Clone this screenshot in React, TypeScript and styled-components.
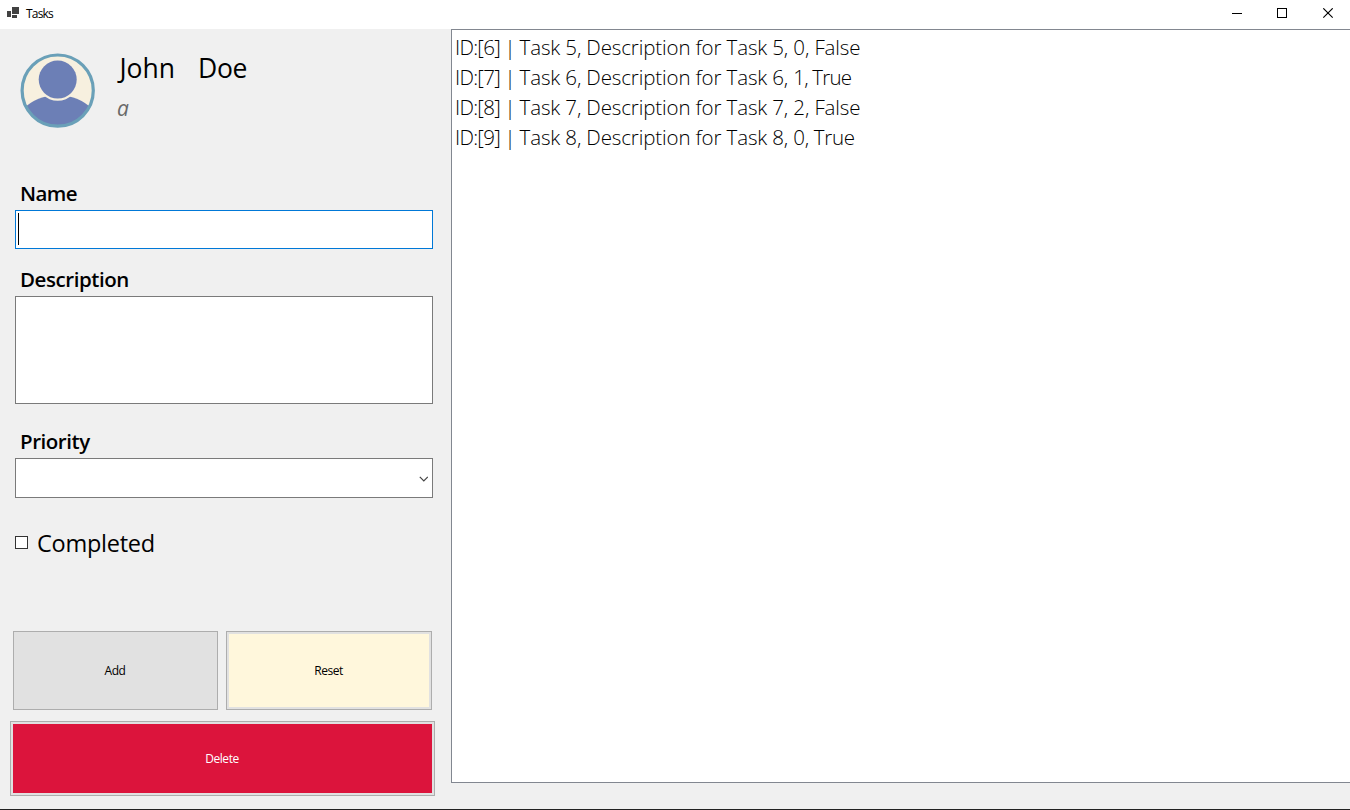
import React from "react";
import styled, { createGlobalStyle } from "styled-components";

const Global = createGlobalStyle`
  * { box-sizing: border-box; }
  html, body { margin: 0; overflow: hidden; background: #f0f0f0; }
  body { font-family: "Segoe UI", "Open Sans", "Noto Sans", sans-serif; color: #000; }
`;

const Window = styled.div`
  display: flex;
  flex-direction: column;
  width: 1350px;
  height: 810px;
  background: #f0f0f0;
  border-bottom: 1px solid #222;
`;

const TitleBar = styled.header`
  display: flex;
  flex: none;
  align-items: center;
  height: 29px;
  padding: 0 16px 3px 7px;
  background: #fff;
`;

const AppTitle = styled.span`
  margin: 1px 0 0 7px;
  font-size: 12px;
  line-height: 16px;
  letter-spacing: -0.8px;
`;

const WindowControls = styled.div`
  display: flex;
  gap: 34px;
  margin-left: auto;
`;

const Body = styled.main`
  display: flex;
  flex: 1;
  min-height: 0;
`;

const Sidebar = styled.section`
  flex: none;
  display: flex;
  flex-direction: column;
  width: 451px;
  padding: 24px 0 0 15px;
`;

const Profile = styled.div`
  display: flex;
  height: 121px;
  padding-left: 5px;
`;

const ProfileText = styled.div`
  margin-left: 22px;
`;

const FullName = styled.div`
  display: flex;
  gap: 23px;
  height: 30px;
  padding-left: 2.5px;
  font-size: 26.5px;
  line-height: 30px;
`;

const NamePart = styled.span<{ $track: number }>`
  letter-spacing: ${(p) => p.$track}px;
`;

const Role = styled.div`
  margin-top: 10px;
  font-size: 21px;
  line-height: 30px;
  font-style: italic;
  color: #696969;
`;

const Label = styled.label<{ $track: number }>`
  display: block;
  height: 36px;
  padding: 4px 0 0 5px;
  font-size: 20.5px;
  font-weight: 600;
  line-height: 30px;
  letter-spacing: ${(p) => p.$track}px;
`;

const Field = styled.div<{ $height: number; $gap: number; $focused?: boolean }>`
  display: flex;
  align-items: center;
  flex: none;
  width: 418px;
  height: ${(p) => p.$height}px;
  margin-bottom: ${(p) => p.$gap}px;
  padding: 0 2px;
  background: #fff;
  border: 1px solid ${(p) => (p.$focused ? "#0078d7" : "#7a7a7a")};
`;

const Caret = styled.span`
  width: 1px;
  height: 32px;
  margin-bottom: 1px;
  background: #000;
`;

const Chevron = styled.svg`
  margin: 1px 2px 0 auto;
`;

const CheckRow = styled.div`
  display: flex;
  align-items: center;
  height: 30px;
`;

const CheckBox = styled.span`
  width: 13px;
  height: 13px;
  margin: 0 9px 2px 0;
  background: #fff;
  border: 1px solid #333;
`;

const CheckText = styled.span`
  font-size: 23.5px;
  line-height: 30px;
  letter-spacing: -0.25px;
`;

const Actions = styled.div`
  display: grid;
  grid-template-columns: 205px 206px;
  column-gap: 8px;
  margin: 73px 0 11px -2px;
`;

const Button = styled.button<{ $fill: string; $ink?: string }>`
  height: 79px;
  padding: 0 1px 0 0;
  font: 12px/16px "Segoe UI", "Open Sans", "Noto Sans", sans-serif;
  letter-spacing: -0.45px;
  color: ${(p) => p.$ink ?? "#000"};
  background: ${(p) => p.$fill};
  border: 1px solid #adadad;
  border-radius: 0;
  box-shadow: inset 0 0 0 2px #e1e1e1;
`;

const DeleteButton = styled(Button)`
  width: 425px;
  height: 75px;
  margin-left: -5px;
`;

const TaskList = styled.ul`
  flex: 1;
  height: 754px;
  margin: 0;
  padding: 2px 0 0 3px;
  list-style: none;
  background: #fff;
  border: 1px solid #828790;
  border-right: 0;
`;

const TaskRow = styled.li`
  height: 30px;
  font-size: 20.5px;
  font-weight: 340;
  line-height: 30px;
  white-space: pre;
`;

const Segment = styled.span<{ $track: number }>`
  letter-spacing: ${(p) => p.$track}px;
`;

const tasks = [
  { id: 6, text: "Task 5, Description for Task 5, ", state: "0, False", track: -0.13 },
  { id: 7, text: "Task 6, Description for Task 6, ", state: "1, True", track: -0.8 },
  { id: 8, text: "Task 7, Description for Task 7, ", state: "2, False", track: -0.13 },
  { id: 9, text: "Task 8, Description for Task 8, ", state: "0, True", track: -0.3 },
];

const Avatar = () => (
  <svg width="75" height="75" viewBox="0 0 75 75">
    <defs>
      <clipPath id="disc">
        <circle cx="37.7" cy="37.6" r="35" />
      </clipPath>
    </defs>
    <circle cx="37.7" cy="37.6" r="35.5" fill="#f7f0df" />
    <g clipPath="url(#disc)">
      <circle cx="37.7" cy="92" r="50" fill="#6c7fb6" />
      <circle cx="37.7" cy="26.6" r="21.2" fill="#f7f0df" />
    </g>
    <circle cx="37.7" cy="26.6" r="19" fill="#6c7fb6" />
    <circle cx="37.7" cy="37.6" r="35.6" fill="none" stroke="#6aa0b8" strokeWidth="3.2" />
  </svg>
);

export default function App() {
  return (
    <>
      <Global />
      <Window>
        <TitleBar>
          <svg width="12" height="12" viewBox="0 0 12 12" fill="#424242" shapeRendering="crispEdges">
            <rect x="0" y="4" width="4" height="6" />
            <rect x="5" y="0" width="7" height="7" />
            <rect x="5" y="8" width="5" height="3" />
          </svg>
          <AppTitle>Tasks</AppTitle>
          <WindowControls>
            <svg width="11" height="11" viewBox="0 0 11 11">
              <path d="M0 5.5H10" stroke="#000" />
            </svg>
            <svg width="11" height="11" viewBox="0 0 11 11">
              <rect x="0.5" y="0.5" width="9" height="9" fill="none" stroke="#000" />
            </svg>
            <svg width="12" height="11" viewBox="0 0 12 11">
              <path d="M1.3 0.3L10.7 9.7M10.7 0.3L1.3 9.7" stroke="#000" strokeWidth="1.1" />
            </svg>
          </WindowControls>
        </TitleBar>
        <Body>
          <Sidebar>
            <Profile>
              <Avatar />
              <ProfileText>
                <FullName>
                  <NamePart $track={0}>John</NamePart>
                  <NamePart $track={-0.4}>Doe</NamePart>
                </FullName>
                <Role>a</Role>
              </ProfileText>
            </Profile>
            <Label $track={-0.6}>Name</Label>
            <Field $height={39} $gap={11} $focused>
              <Caret />
            </Field>
            <Label $track={-0.44}>Description</Label>
            <Field $height={108} $gap={18} />
            <Label $track={-0.46}>Priority</Label>
            <Field $height={40} $gap={30}>
              <Chevron width="9" height="6" viewBox="0 0 9 6">
                <path d="M0.8 0.8L4.8 4.8L8.8 0.8" fill="none" stroke="#444" strokeWidth="1.2" />
              </Chevron>
            </Field>
            <CheckRow>
              <CheckBox />
              <CheckText>Completed</CheckText>
            </CheckRow>
            <Actions>
              <Button $fill="#e1e1e1">Add</Button>
              <Button $fill="#fff7dc">Reset</Button>
            </Actions>
            <DeleteButton $fill="#dc143c" $ink="#fff">Delete</DeleteButton>
          </Sidebar>
          <TaskList>
            {tasks.map((t) => (
              <TaskRow key={t.id}>
                <Segment $track={-0.72}>{`ID:[${t.id}] | `}</Segment>
                <Segment $track={-0.13}>{t.text}</Segment>
                <Segment $track={t.track}>{t.state}</Segment>
              </TaskRow>
            ))}
          </TaskList>
        </Body>
      </Window>
    </>
  );
}
